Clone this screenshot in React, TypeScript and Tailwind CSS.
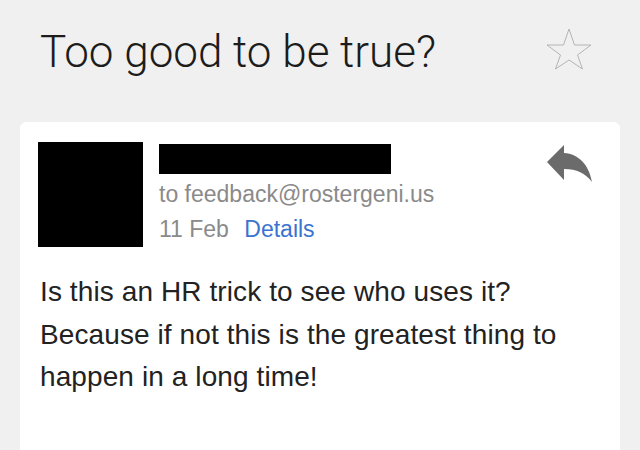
const ReplyIcon = () => (
  <svg width="46" height="38" viewBox="0 0 46 38" className="text-[#6b6b6b]">
    <path
      d="M0 17 L17 0 L17 8 C 32 9 42 20 45 37 C 38 28 30 24 17 24 L17 35 Z"
      fill="currentColor"
    />
  </svg>
);

export default function App() {
  return (
    <div className="w-[640px] h-[450px] overflow-hidden bg-[#f0f0f0] font-['Liberation_Sans',Arial,sans-serif]">
      {/* header */}
      <div className="flex items-start justify-between pl-[40px] pr-[48px] pt-[24px] h-[122px]">
        <h1 className="font-['Roboto',sans-serif] font-light text-[44px] leading-[56px] text-[#1c1c1c]">
          Too good to be true?
        </h1>
        <svg width="46" height="42" viewBox="0 0 46 42" className="mt-[4px]">
          <polygon
            points="23,1 28.5,17 45,17 31.5,27 36.5,41 23,32 9.5,41 14.5,27 1,17 17.5,17"
            fill="none"
            stroke="#b4b4b4"
            strokeWidth="1"
          />
        </svg>
      </div>

      {/* message card */}
      <div className="mx-[20px] bg-white rounded-t-[6px] h-[340px] pt-[20px] px-[18px]">
        <div className="flex items-start">
          <div className="w-[105px] h-[105px] bg-black shrink-0" />
          <div className="ml-[16px] flex-1 pt-[2px]">
            <div className="w-[232px] h-[30px] bg-black" />
            <div className="mt-[4px] text-[23px] leading-[32px] text-[#8a8a8a]">
              to feedback@rostergeni.us
            </div>
            <div className="mt-[3px] text-[23px] leading-[32px] text-[#8a8a8a]">
              11 Feb <span className="ml-[9px] text-[#3b73d0]">Details</span>
            </div>
          </div>
          <div className="pt-[3px] pr-[9px]">
            <ReplyIcon />
          </div>
        </div>

        <p className="mt-[24px] pl-[2px] text-[28px] leading-[42.5px] tracking-[0.1px] text-[#222222]">
          Is this an HR trick to see who uses it?
          <br />
          Because if not this is the greatest thing to
          <br />
          happen in a long time!
        </p>
      </div>
    </div>
  );
}
